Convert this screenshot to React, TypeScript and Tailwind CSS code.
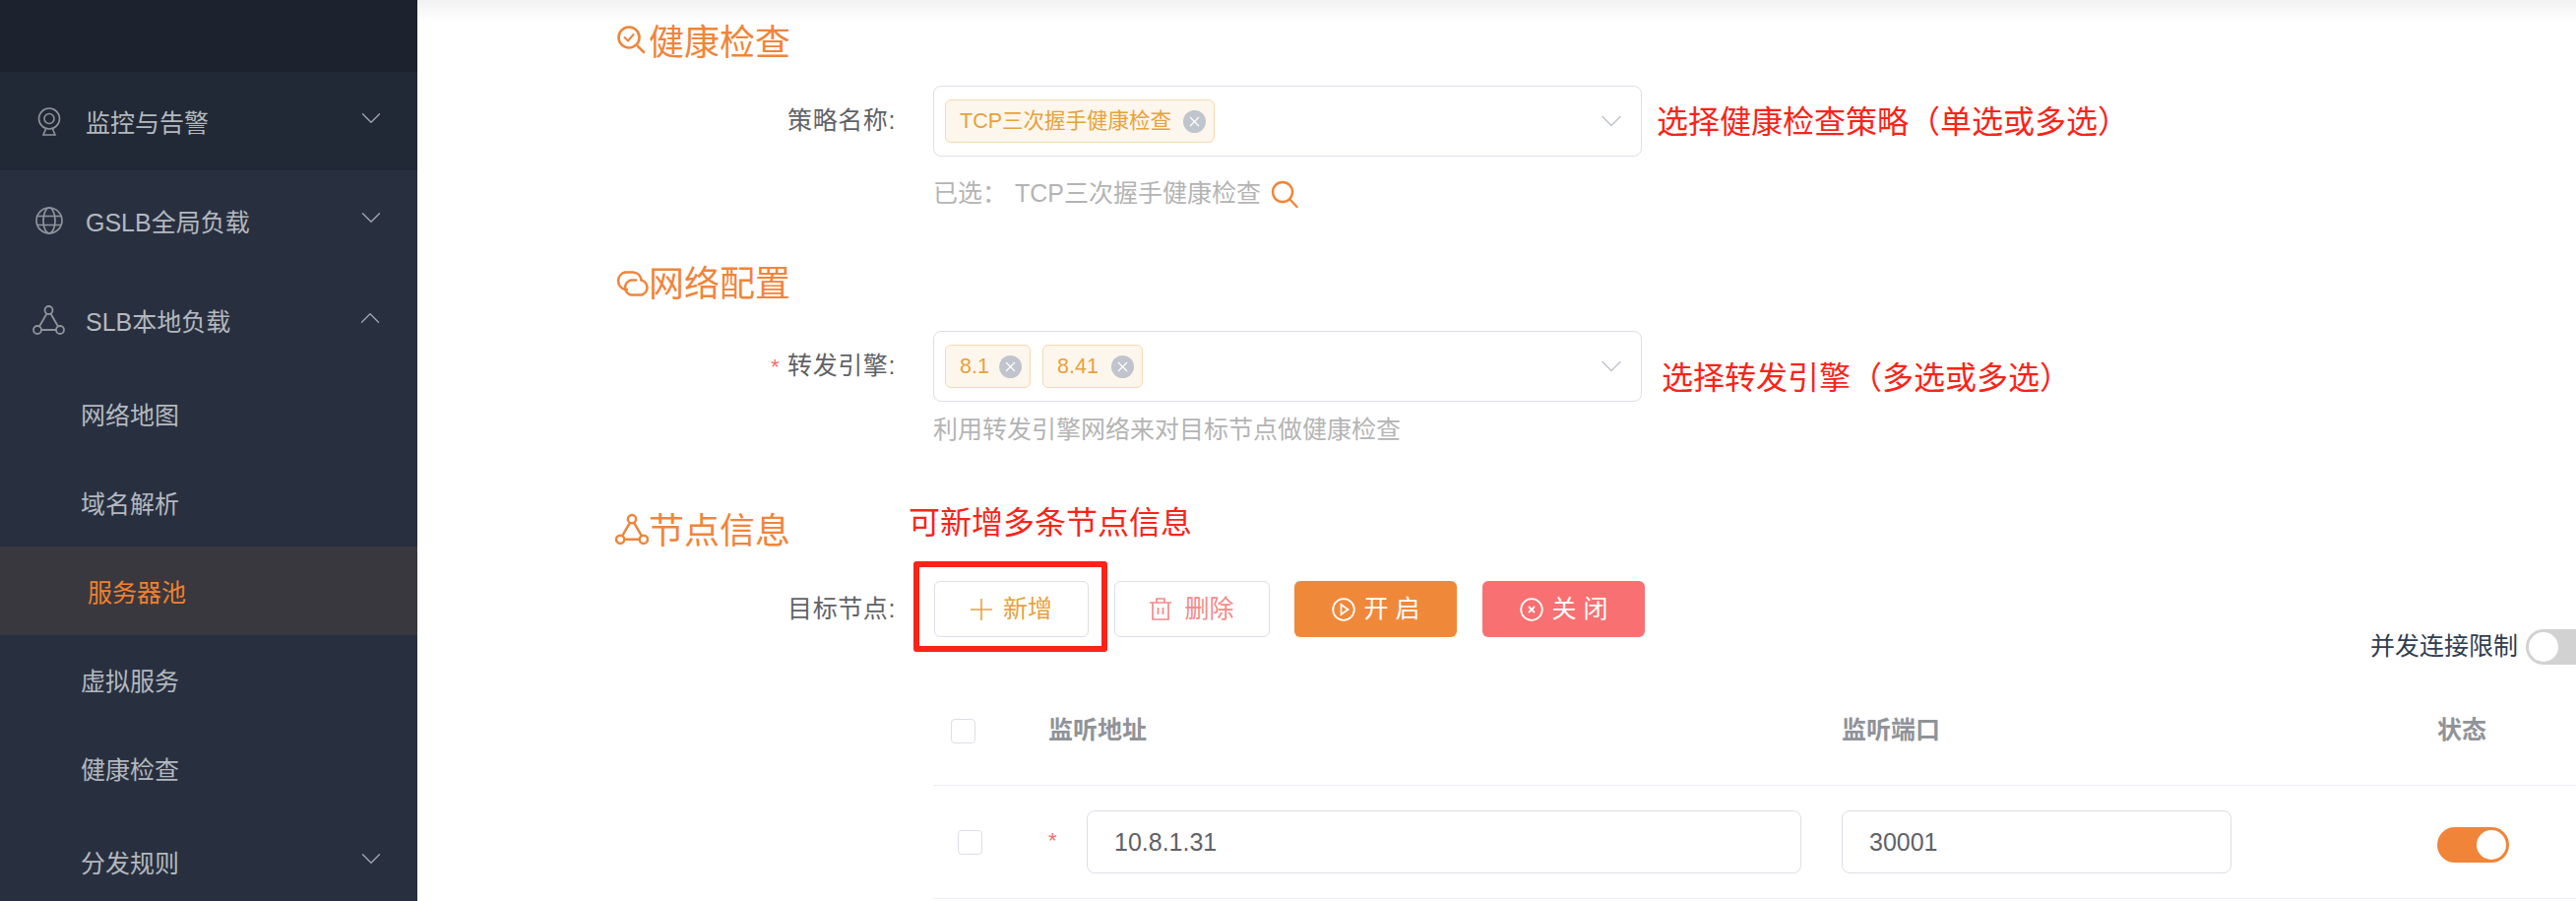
import React from 'react';
import { ChevronDown, ChevronUp } from 'lucide-react';

const font = "font-['Liberation_Sans','Noto_Sans_CJK_SC',sans-serif]";

function CameraIcon() {
  return (
    <svg width="24" height="29" viewBox="0 0 24 29" fill="none" stroke="currentColor" strokeWidth="1.6">
      <circle cx="12" cy="11.5" r="10.5" />
      <circle cx="12" cy="11.5" r="5" />
      <path d="M8.5 22 L6 28 H18 L15.5 22" />
    </svg>
  );
}

function GlobeIcon() {
  return (
    <svg width="28" height="28" viewBox="0 0 28 28" fill="none" stroke="currentColor" strokeWidth="1.7">
      <circle cx="14" cy="14" r="13" />
      <ellipse cx="14" cy="14" rx="6" ry="13" />
      <path d="M2 9.5 H26 M2 18.5 H26" />
    </svg>
  );
}

function NodesIcon({ size = 33, stroke = 1.8 }: { size?: number; stroke?: number }) {
  return (
    <svg className="shrink-0" width={size} height={size} viewBox="0 0 33 31" fill="none" stroke="currentColor" strokeWidth={stroke}>
      <circle cx="16.5" cy="5" r="4" />
      <circle cx="5" cy="25" r="4" />
      <circle cx="28" cy="25" r="4" />
      <path d="M14.5 8.5 L7 21.5 M18.5 8.5 L26 21.5 M9 25 H24" />
    </svg>
  );
}

function SearchCheckIcon() {
  return (
    <svg className="-mt-[6px]" width="29" height="29" viewBox="0 0 29 29" fill="none" stroke="#f0853a" strokeWidth="2.6" strokeLinecap="round">
      <circle cx="12" cy="12" r="10.5" />
      <path d="M7.5 12 L11 15.5 L16.5 9" strokeWidth="2" />
      <path d="M21 21 L27 27" />
    </svg>
  );
}

function LinkIcon() {
  return (
    <svg className="shrink-0 ml-[2px]" width="34" height="26" viewBox="0 0 34 26" fill="none" stroke="#f0853a" strokeWidth="2.6" strokeLinecap="round">
      <path d="M11 19 H9 A9 9 0 0 1 9 1.5 H17 A9 9 0 0 1 25.5 9" />
      <path d="M20 9.5 H15 A7.7 7.7 0 0 0 15 24.5 H25.5 A7.7 7.7 0 0 0 25.5 9.5" />
    </svg>
  );
}

function SectionTitle({ icon, title, offset }: { icon: React.ReactNode; title: string; offset: string }) {
  return (
    <div className="flex items-center gap-[3px] h-[42px] text-[36px] leading-[42px] text-[#f0853a]">
      <span className="w-[29px] flex justify-center">{icon}</span>
      <span className={offset}>{title}</span>
    </div>
  );
}

function Label({ text, required }: { text: string; required?: boolean }) {
  return (
    <div className="w-[486px] shrink-0 text-right text-[25px] tracking-[0.6px] text-[#606266]">
      {required && <span className="text-[#f56c6c] mr-[8px] text-[22px]">*</span>}
      {text}:
    </div>
  );
}

function Tag({ text, width }: { text: string; width: string }) {
  return (
    <span className={`flex items-center justify-between h-[44px] pl-[14px] pr-[8px] rounded-[6px] border border-[#f5dab1] bg-[#fdf6ec] text-[21.5px] text-[#e6a23c] ${width}`}>
      {text}
      <span className="w-[23px] h-[23px] rounded-full bg-[#c0c4cc] text-white flex items-center justify-center">
        <svg width="11" height="11" viewBox="0 0 11 11" stroke="white" strokeWidth="1.2">
          <path d="M1 1 L10 10 M10 1 L1 10" />
        </svg>
      </span>
    </span>
  );
}

function Select({ children }: { children: React.ReactNode }) {
  return (
    <div className="ml-[38px] w-[720px] h-[72px] shrink-0 rounded-[8px] border border-[#dcdfe6] bg-white flex items-center justify-between pl-[11px] pr-[12px]">
      <div className="flex items-center gap-[12px]">{children}</div>
      <ChevronDown className="text-[#c0c4cc] -mt-[1px]" size={36} strokeWidth={1} />
    </div>
  );
}

function Toggle({ on }: { on?: boolean }) {
  return (
    <div className={`h-[36px] rounded-full p-[3px] flex shrink-0 ${on ? 'w-[73px] bg-[#f0853a] justify-end' : 'w-[73px] bg-[#d2d2d2]'}`}>
      <span className="w-[30px] h-[30px] rounded-full bg-white" />
    </div>
  );
}

function SideItem({ icon, text, height, arrow, dark }: { icon: React.ReactNode; text: string; height: string; arrow?: 'up' | 'down'; dark?: boolean }) {
  return (
    <div className={`flex items-center ${height} ${dark ? 'bg-[#212936]' : ''}`}>
      <span className="w-[87px] pl-[12px] flex justify-center text-[#8f949c]">{icon}</span>
      <span className="flex-1 pt-[5px]">{text}</span>
      {arrow === 'down' && <ChevronDown className="mr-[30px] -mt-[6px] text-[#a4a9b0]" size={34} strokeWidth={0.9} />}
      {arrow === 'up' && <ChevronUp className="mr-[31px] -mt-[4px] text-[#a4a9b0]" size={34} strokeWidth={0.9} />}
    </div>
  );
}

function SubItem({ text, active, arrow, height = 'h-[90px]' }: { text: string; active?: boolean; arrow?: boolean; height?: string }) {
  return (
    <div className={`flex items-center ${height} ${active ? 'bg-[#38383e] text-[#f0812f] pl-[89px]' : 'pl-[82px]'}`}>
      <span className="flex-1 pt-[5px]">{text}</span>
      {arrow && <ChevronDown className="mr-[30px] -mt-[6px] text-[#a4a9b0]" size={34} strokeWidth={0.9} />}
    </div>
  );
}

function Sidebar() {
  return (
    <aside className="w-[424px] shrink-0 h-full overflow-hidden bg-[#283040] text-[25px] text-[#b4b8bd]">
      <div className="h-[73px] bg-[#1c222e]" />
      <SideItem icon={<CameraIcon />} text="监控与告警" height="h-[100px]" arrow="down" dark />
      <SideItem icon={<GlobeIcon />} text="GSLB全局负载" height="h-[102px]" arrow="down" />
      <SideItem icon={<NodesIcon />} text="SLB本地负载" height="h-[100px]" arrow="up" />
      <SubItem text="网络地图" />
      <SubItem text="域名解析" />
      <SubItem text="服务器池" active />
      <SubItem text="虚拟服务" />
      <SubItem text="健康检查" />
      <SubItem text="分发规则" arrow height="h-[100px]" />
    </aside>
  );
}

export default function App() {
  return (
    <div className={`flex w-[2617px] h-[915px] overflow-hidden bg-white ${font}`}>
      <Sidebar />
      <main className="flex-1 min-w-0">
        <div className="h-[22px] bg-gradient-to-b from-[#f2f2f2] to-white" />

        <div className="pl-[203px]">
          <SectionTitle icon={<SearchCheckIcon />} title="健康检查" offset="pt-[2px]" />
        </div>
        <div className="flex items-center mt-[23px]">
          <Label text="策略名称" />
          <Select>
            <Tag text="TCP三次握手健康检查" width="w-[274px]" />
          </Select>
          <span className="ml-[15px] pt-[2px] text-[32px] text-[#fb2318] whitespace-nowrap">选择健康检查策略（单选或多选）</span>
        </div>
        <div className="flex items-center h-[40px] mt-[18px] ml-[524px] text-[25px] text-[#b4b4b4]">
          <span>已选：</span>
          <span className="ml-[8px]">TCP三次握手健康检查</span>
          <svg className="ml-[10px]" width="28" height="28" viewBox="0 0 28 28" fill="none" stroke="#f0853a" strokeWidth="2.4" strokeLinecap="round">
            <circle cx="12" cy="12" r="10" />
            <path d="M19.5 19.5 L26.5 27" />
          </svg>
        </div>

        <div className="pl-[203px] mt-[50px]">
          <SectionTitle icon={<LinkIcon />} title="网络配置" offset="pt-[2px]" />
        </div>
        <div className="flex items-center mt-[27px]">
          <Label text="转发引擎" required />
          <Select>
            <Tag text="8.1" width="w-[87px]" />
            <Tag text="8.41" width="w-[102px]" />
          </Select>
          <span className="ml-[20px] mt-[23px] text-[32px] text-[#fb2318] whitespace-nowrap">选择转发引擎（多选或多选）</span>
        </div>
        <div className="h-[40px] leading-[40px] pt-[1px] mt-[7px] ml-[524px] text-[25px] text-[#b4b4b4]">利用转发引擎网络来对目标节点做健康检查</div>

        <div className="flex items-start pl-[203px] mt-[62px]">
          <SectionTitle icon={<NodesIcon size={34} stroke={2.4} />} title="节点信息" offset="pt-[3px]" />
          <span className="ml-[120px] -mt-[7px] text-[32px] leading-[42px] text-[#fb2318] whitespace-nowrap">可新增多条节点信息</span>
        </div>

        <div className="flex items-center mt-[31px]">
          <Label text="目标节点" />
          <div className="relative ml-[39px] w-[157px] h-[57px] rounded-[6px] border border-[#dcdfe6] flex items-center justify-center gap-[11px] text-[25px] text-[#e6a23c]">
            <svg width="22" height="22" viewBox="0 0 22 22" stroke="currentColor" strokeWidth="1.6">
              <path d="M11 0 V22 M0 11 H22" />
            </svg>
            <span>新增</span>
            <div className="absolute -top-[21px] -left-[22px] w-[197px] h-[92px] border-[6px] border-[#fb2318] rounded-[3px]" />
          </div>
          <div className="ml-[26px] w-[158px] h-[57px] rounded-[6px] border border-[#dcdfe6] flex items-center justify-center gap-[13px] text-[25px] text-[#f78989]">
            <svg width="22" height="23" viewBox="0 0 22 23" fill="none" stroke="currentColor" strokeWidth="1.7">
              <path d="M0 5 H22 M7 5 V1 H15 V5 M3 5 V22 H19 V5 M8.5 10 V17 M13.5 10 V17" />
            </svg>
            <span>删除</span>
          </div>
          <div className="ml-[25px] w-[165px] h-[57px] rounded-[6px] bg-[#f0883a] flex items-center justify-center gap-[9px] text-[25px] text-white">
            <svg width="24" height="24" viewBox="0 0 24 24" fill="none" stroke="white" strokeWidth="1.8">
              <circle cx="12" cy="12" r="10.8" />
              <path d="M9.5 7 L16.5 12 L9.5 17 Z" />
            </svg>
            <span>开 启</span>
          </div>
          <div className="ml-[26px] w-[165px] h-[57px] rounded-[6px] bg-[#f87071] flex items-center justify-center gap-[9px] text-[25px] text-white">
            <svg width="24" height="24" viewBox="0 0 24 24" fill="none" stroke="white" strokeWidth="1.8">
              <circle cx="12" cy="12" r="10.8" />
              <path d="M9 9 L15 15 M15 9 L9 15" />
            </svg>
            <span>关 闭</span>
          </div>
        </div>

        <div className="flex items-center justify-end -mt-[8px] -mr-[22px] gap-[8px] h-[36px]">
          <span className="text-[25px] text-[#2f3e50]">并发连接限制</span>
          <Toggle />
        </div>

        <div className="ml-[524px] mt-[12px]">
          <div className="flex items-center h-[111px] border-b border-[#ebeef5] text-[25px] font-bold text-[#909399]">
            <span className="ml-[18px] w-[25px] h-[25px] rounded-[4px] border border-[#dcdfe6]" />
            <span className="ml-[74px] w-[806px]">监听地址</span>
            <span className="w-[605px]">监听端口</span>
            <span>状态</span>
          </div>
          <div className="flex items-center h-[115px] border-b border-[#ebeef5]">
            <span className="ml-[25px] w-[25px] h-[25px] rounded-[4px] border border-[#dcdfe6]" />
            <span className="ml-[67px] w-[39px] -mt-[4px] text-[22px] text-[#f56c6c]">*</span>
            <div className="w-[726px] h-[64px] rounded-[8px] border border-[#dcdfe6] flex items-center pl-[27px] pt-[2px] text-[25px] text-[#606266]">10.8.1.31</div>
            <div className="ml-[41px] w-[396px] h-[64px] rounded-[8px] border border-[#dcdfe6] flex items-center pl-[27px] pt-[2px] text-[25px] text-[#606266]">30001</div>
            <div className="ml-[209px] mt-[6px]"><Toggle on /></div>
          </div>
        </div>
      </main>
    </div>
  );
}
